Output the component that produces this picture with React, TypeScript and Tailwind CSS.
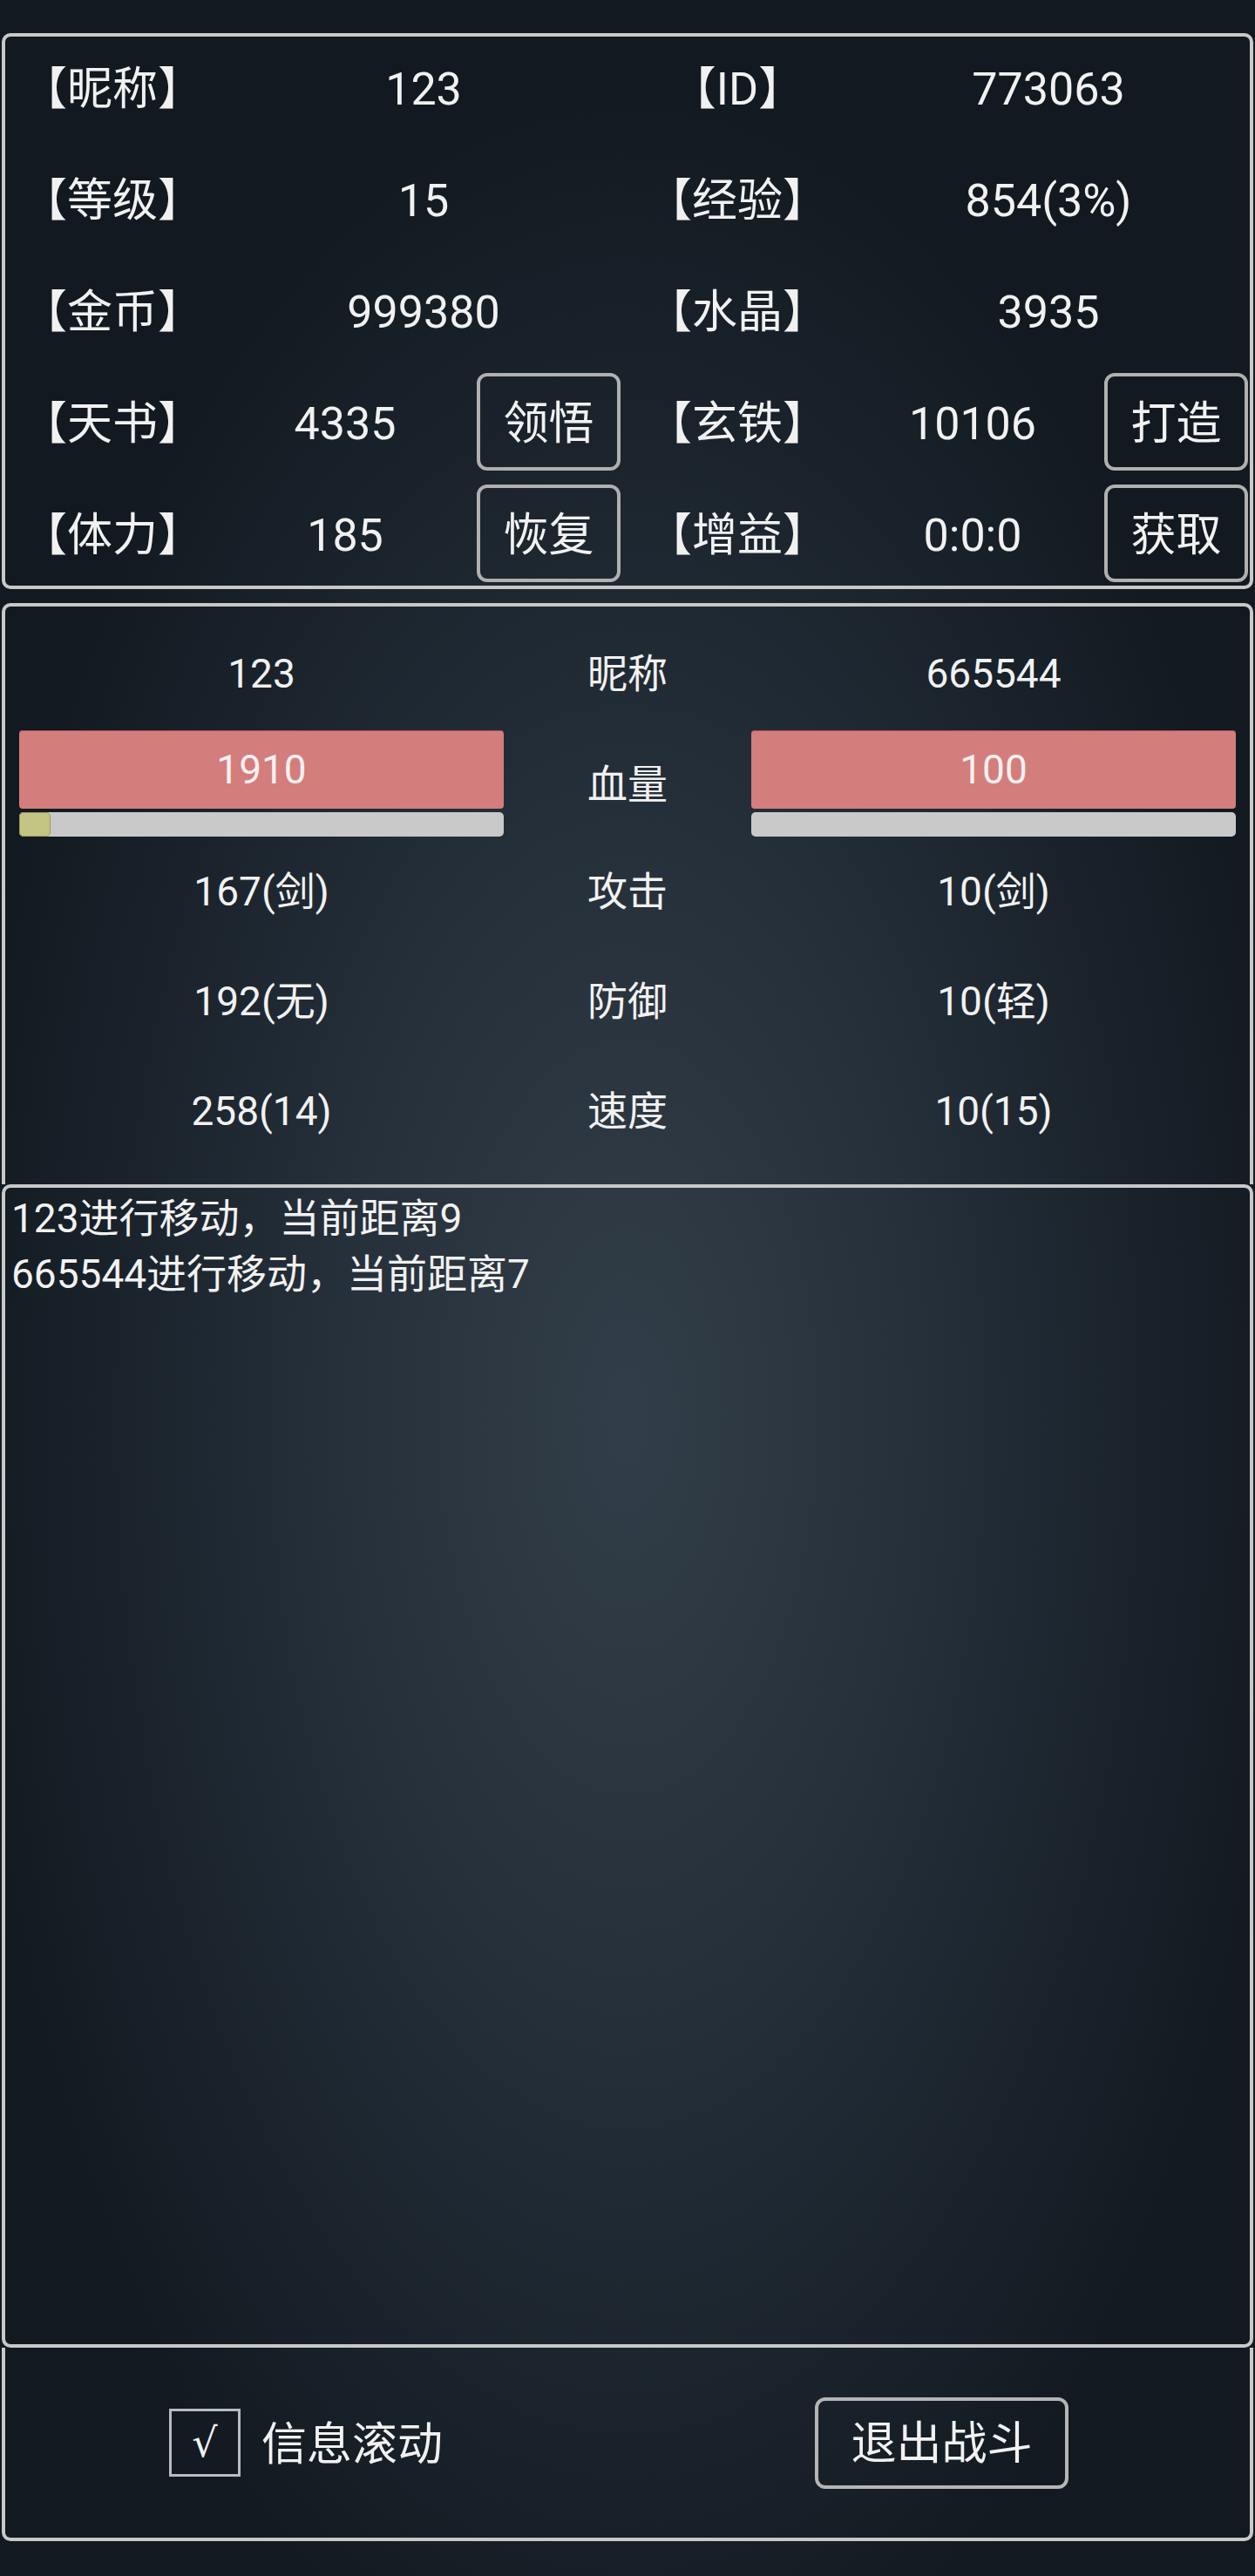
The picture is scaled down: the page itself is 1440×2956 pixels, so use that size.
import React from "react";

type Row = {
  l1: string;
  v1: string;
  b1?: string;
  l2: string;
  v2: string;
  b2?: string;
};

const rows: Row[] = [
  { l1: "【昵称】", v1: "123", l2: "【ID】", v2: "773063" },
  { l1: "【等级】", v1: "15", l2: "【经验】", v2: "854(3%)" },
  { l1: "【金币】", v1: "999380", l2: "【水晶】", v2: "3935" },
  { l1: "【天书】", v1: "4335", b1: "领悟", l2: "【玄铁】", v2: "10106", b2: "打造" },
  { l1: "【体力】", v1: "185", b1: "恢复", l2: "【增益】", v2: "0:0:0", b2: "获取" },
];

const stats = [
  { a: "167(剑)", m: "攻击", b: "10(剑)" },
  { a: "192(无)", m: "防御", b: "10(轻)" },
  { a: "258(14)", m: "速度", b: "10(15)" },
];

function Btn({ text }: { text: string }) {
  return (
    <div className="ml-[7px] flex h-[112px] w-[165px] items-center justify-center rounded-[12px] border-[4px] border-[#b0b0b0] pt-[5px] text-[52px] leading-none">
      {text}
    </div>
  );
}

function Cell({ children, span }: { children: React.ReactNode; span?: boolean }) {
  return (
    <div
      className={
        span
          ? "col-span-2 flex h-[112px] items-center justify-center pt-[6px] leading-none"
          : "flex h-[112px] items-center justify-center pt-[6px] leading-none"
      }
    >
      {children}
    </div>
  );
}

function HpBar({ value, fill }: { value: string; fill: boolean }) {
  return (
    <div className="flex flex-col">
      <div className="flex h-[90px] items-center justify-center rounded-[4px] bg-[#d37d7c] text-[46px] leading-none text-[#f6f0f0] shadow-[inset_0_1px_0_rgba(120,40,40,0.5)]">
        {value}
      </div>
      <div className="mt-[4px] flex h-[28px] rounded-[5px] bg-[#c9c9c9]">
        {fill ? (
          <div className="h-full w-[36px] rounded-[5px] border border-[#9a9a60] bg-[#c4c583]" />
        ) : null}
      </div>
    </div>
  );
}

export default function App() {
  return (
    <div className="h-[2956px] w-[1440px] bg-[radial-gradient(ellipse_780px_1550px_at_50%_55%,#323e49_0%,#27313b_40%,#1a232c_75%,#121920_100%)] px-[2px] pt-[38px] font-['Roboto','Noto_Sans_CJK_SC',sans-serif] text-[#f1f1f1]">
      {/* Panel 1: player info */}
      <div className="rounded-[10px] border-[4px] border-[#c8c8c8] pb-[4px] pt-[2px] text-[52px]">
        <div className="grid grid-cols-[246px_288px_180px_252px_288px_174px] gap-y-[16px]">
          {rows.map((r, i) => (
            <React.Fragment key={i}>
              <Cell>{r.l1}</Cell>
              {r.b1 ? (
                <>
                  <Cell>{r.v1}</Cell>
                  <div className="flex h-[112px] items-center">
                    <Btn text={r.b1} />
                  </div>
                </>
              ) : (
                <Cell span>{r.v1}</Cell>
              )}
              <Cell>{r.l2}</Cell>
              {r.b2 ? (
                <>
                  <Cell>{r.v2}</Cell>
                  <div className="flex h-[112px] items-center">
                    <Btn text={r.b2} />
                  </div>
                </>
              ) : (
                <Cell span>{r.v2}</Cell>
              )}
            </React.Fragment>
          ))}
        </div>
      </div>

      {/* Panel 2: battle stats */}
      <div className="mt-[16px] rounded-t-[10px] border-[4px] border-b-0 border-[#c8c8c8] px-[16px] pb-[21px] pt-[22px] text-[46px] leading-none">
        <div className="grid h-[110px] grid-cols-[556px_284px_556px] items-center text-center">
          <div>123</div>
          <div>昵称</div>
          <div>665544</div>
        </div>
        <div className="mt-[10px] grid grid-cols-[556px_284px_556px] items-center">
          <HpBar value="1910" fill />
          <div className="pt-[2px] text-center">血量</div>
          <HpBar value="100" fill={false} />
        </div>
        {stats.map((s) => (
          <div
            key={s.m}
            className="grid h-[126px] grid-cols-[556px_284px_556px] items-center text-center"
          >
            <div>{s.a}</div>
            <div>{s.m}</div>
            <div>{s.b}</div>
          </div>
        ))}
      </div>

      {/* Panel 3: battle log */}
      <div className="h-[1335px] rounded-[10px] border-[4px] border-[#c8c8c8] px-[7px] pt-[3px] text-[46px] leading-[64px]">
        <div>123进行移动，当前距离9</div>
        <div>665544进行移动，当前距离7</div>
      </div>

      {/* Panel 4: controls */}
      <div className="flex h-[222px] items-center rounded-b-[10px] border-[4px] border-t-0 border-[#c8c8c8] pl-[188px] text-[52px] leading-none">
        <div className="flex h-[78px] w-[82px] items-center justify-center border-[3px] border-[#b8bcc2] bg-[#131a21] font-['DejaVu_Sans',sans-serif] text-[46px]">
          √
        </div>
        <div className="ml-[24px] pt-[5px]">信息滚动</div>
        <div className="ml-auto mr-[208px] flex h-[105px] w-[291px] items-center justify-center rounded-[12px] border-[4px] border-[#b5b5b5] pt-[3px]">
          退出战斗
        </div>
      </div>
    </div>
  );
}
